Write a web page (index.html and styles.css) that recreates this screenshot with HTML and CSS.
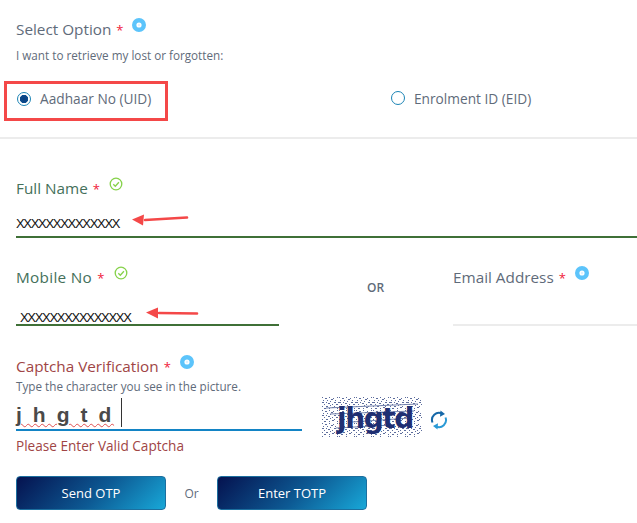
FILE: index.html
```html
<!DOCTYPE html>
<html lang="en">
<head>
    <meta charset="UTF-8">
    <title>Retrieve Lost or Forgotten EID/UID</title>
    <link rel="stylesheet" href="styles.css">
</head>
<body>
    <section class="option-block">
        <div class="label">Select Option <span class="req">*</span> <svg class="info" viewBox="0 0 14 14"><circle cx="7" cy="7" r="4.8" fill="none" stroke="#5cc4fb" stroke-width="4.4"/><circle cx="7" cy="7" r="1.2" fill="#e0f2ff"/></svg></div>
        <p class="hint">I want to retrieve my lost or forgotten:</p>
        <div class="radio-row">
            <div class="radio-item marked">
                <span class="radio checked"></span>
                <span>Aadhaar No (UID)</span>
            </div>
            <div class="radio-item second">
                <span class="radio"></span>
                <span>Enrolment ID (EID)</span>
            </div>
        </div>
    </section>

    <section class="form-block">
        <div class="field">
            <div class="label green">Full Name <span class="req">*</span> <svg class="ok" viewBox="0 0 14 14"><circle cx="7" cy="7" r="5.8" fill="none" stroke="#86d24a" stroke-width="1.3"/><path d="M4.3 7.2l2 2 3.6-4" fill="none" stroke="#86d24a" stroke-width="1.3"/></svg></div>
            <div class="value-line full">
                <span class="typed">XXXXXXXXXXXXXX</span>
                <svg class="arrow arrow-name" viewBox="0 0 58 14"><path d="M56 4.5L14 7" stroke="#f44848" stroke-width="2.6" stroke-linecap="round" fill="none"/><path d="M1 6.5L13 1.5L12 12.5Z" fill="#f44848"/></svg>
            </div>
        </div>

        <div class="contact-row">
            <div class="field mobile">
                <div class="label green">Mobile No <span class="req">*</span> <svg class="ok" viewBox="0 0 14 14"><circle cx="7" cy="7" r="5.8" fill="none" stroke="#86d24a" stroke-width="1.3"/><path d="M4.3 7.2l2 2 3.6-4" fill="none" stroke="#86d24a" stroke-width="1.3"/></svg></div>
                <div class="value-line short">
                    <span class="typed">XXXXXXXXXXXXXXX</span>
                    <svg class="arrow arrow-mobile" viewBox="0 0 54 14"><path d="M52 7.5L14 7" stroke="#f44848" stroke-width="2.6" stroke-linecap="round" fill="none"/><path d="M1 6.5L13 1.5L13 12.5Z" fill="#f44848"/></svg>
                </div>
            </div>
            <div class="or-mark">OR</div>
            <div class="field email">
                <div class="label">Email Address <span class="req">*</span> <svg class="info" viewBox="0 0 14 14"><circle cx="7" cy="7" r="4.8" fill="none" stroke="#5cc4fb" stroke-width="4.4"/><circle cx="7" cy="7" r="1.2" fill="#e0f2ff"/></svg></div>
                <div class="value-line empty"></div>
            </div>
        </div>

        <div class="captcha-block">
            <div class="label red">Captcha Verification <span class="req">*</span> <svg class="info" viewBox="0 0 14 14"><circle cx="7" cy="7" r="4.8" fill="none" stroke="#5cc4fb" stroke-width="4.4"/><circle cx="7" cy="7" r="1.2" fill="#e0f2ff"/></svg></div>
            <p class="hint tight">Type the character you see in the picture.</p>
            <div class="captcha-row">
                <div class="captcha-input"><span class="captcha-text">j h g t d</span><span class="caret"></span></div>
                <svg class="captcha-img" viewBox="0 0 100 40">
                    <defs>
                        <pattern id="noise" width="17" height="13" patternUnits="userSpaceOnUse">
                            <path d="M0 0h1v1H0zM3 1h2v1H3zM7 0h1v1H7zM11 1h1v1h-1zM15 0h1v1h-1zM1 3h1v1H1zM5 3h1v1H5zM9 2h2v1H9zM13 3h1v1h-1zM0 5h2v1H0zM4 5h1v1H4zM8 4h1v1H8zM12 5h2v1h-2zM16 5h1v1h-1zM2 7h1v1H2zM6 6h2v1H6zM10 7h1v1h-1zM14 7h2v1h-2zM0 9h1v1H0zM4 9h2v1H4zM8 8h1v1H8zM12 9h1v1h-1zM2 11h2v1H2zM7 11h1v1H7zM10 10h2v1h-2zM15 11h1v1h-1z" fill="#5c6c9c"/>
                        </pattern>
                    </defs>
                    <rect width="100" height="40" fill="#ffffff"/>
                    <rect width="100" height="40" fill="url(#noise)"/>
                    <path d="M4 11L96 7M8 17L92 14M30 25L88 21M14 31L70 28" stroke="#7583ad" stroke-width="1.2" fill="none"/>
                    <text class="captcha-word" x="15" y="31">jhgtd</text>
                </svg>
                <svg class="refresh" viewBox="0 0 18 20"><path d="M2.5 12.5A7 7 0 0 1 12 3.6" fill="none" stroke="#1668a8" stroke-width="2"/><path d="M10.5 0.5L15 4L10 6.8Z" fill="#1668a8"/><path d="M15.5 7.5A7 7 0 0 1 6 16.4" fill="none" stroke="#2b9ad6" stroke-width="2"/><path d="M7.5 19.5L3 16L8 13.2Z" fill="#2b9ad6"/></svg>
            </div>
            <p class="error">Please Enter Valid Captcha</p>
        </div>

        <div class="button-row">
            <button class="btn">Send OTP</button>
            <span class="btn-or">Or</span>
            <button class="btn">Enter TOTP</button>
        </div>
    </section>
</body>
</html>
```

FILE: styles.css
```css
body {
    font-family: "Open Sans", "Noto Sans", sans-serif;
    margin: 0;
    background-color: #ffffff;
    color: #5f6b7a;
    height: 523px;
    overflow: hidden;
}
p {
    margin: 0;
}
.option-block {
    padding: 18px 0 0 0;
    height: 119px;
    border-bottom: 2px solid #ececec;
}
.label {
    font-size: 15.3px;
    line-height: 20px;
    padding-left: 16px;
    white-space: nowrap;
}
.label.green {
    color: #44705a;
}
.label.red {
    color: #a04545;
}
.req {
    color: #f0203a;
    font-size: 13px;
    margin-left: 1px;
}
.info, .ok {
    width: 14px;
    height: 14px;
    margin-left: 5px;
    vertical-align: 3px;
}
.hint {
    font-size: 11.7px;
    line-height: 15px;
    margin-top: 8px;
    padding-left: 16px;
}
.hint.tight {
    margin-top: 2px;
}
.radio-row {
    display: flex;
    align-items: center;
    margin-top: 18px;
    font-size: 13.7px;
}
.radio-item {
    display: flex;
    align-items: center;
    gap: 9px;
    height: 40px;
    box-sizing: border-box;
    padding-bottom: 6px;
}
.radio-item.marked {
    margin-left: 4px;
    padding: 0 9px 5px 10px;
    width: 164px;
    border: 3px solid #f44848;
}
.radio-item.second {
    margin-left: 223px;
}
.radio {
    width: 12px;
    height: 12px;
    border: 1px solid #1b84b5;
    border-radius: 50%;
    display: block;
    flex-shrink: 0;
    box-sizing: content-box;
}
.radio.checked {
    background: radial-gradient(circle, #0a3f80 0, #0a4a8c 3.8px, #ffffff 4.5px);
}
.form-block {
    padding-top: 38px;
}
.value-line {
    position: relative;
    box-sizing: border-box;
    border-bottom: 2px solid #3f7037;
}
.value-line.full {
    margin: 10px 0 0 16px;
    height: 29px;
    padding-top: 5px;
}
.value-line.short {
    margin: 10px 0 0 0;
    width: 263px;
    height: 28px;
    padding: 10px 0 0 4px;
}
.value-line.empty {
    margin-top: 10px;
    height: 28px;
    border-bottom-color: #ececec;
}
.typed {
    font-family: "Liberation Sans", Arial, sans-serif;
    font-size: 13px;
    line-height: 20px;
    color: #111111;
    display: block;
    letter-spacing: -1.3px;
}
.arrow {
    position: absolute;
}
.arrow-name {
    left: 115px;
    top: 4px;
    width: 58px;
    height: 14px;
}
.arrow-mobile {
    left: 129px;
    top: 8px;
    width: 54px;
    height: 14px;
}
.contact-row {
    display: flex;
    margin-top: 28px;
}
.contact-row .label {
    padding-left: 0;
}
.mobile .label {
    letter-spacing: 0.3px;
}
.mobile {
    margin-left: 16px;
    width: 263px;
}
.or-mark {
    width: 174px;
    padding: 14px 0 0 88px;
    box-sizing: border-box;
    font-size: 12px;
    line-height: 16px;
    font-weight: 600;
}
.email {
    flex: 1;
}
.captcha-block {
    margin-top: 29px;
}
.captcha-row {
    display: flex;
    align-items: flex-start;
    padding-left: 16px;
    margin-top: 3px;
}
.captcha-input {
    width: 286px;
    height: 34px;
    box-sizing: border-box;
    border-bottom: 2px solid #1384c5;
    display: flex;
    align-items: flex-end;
    padding-bottom: 2px;
}
.captcha-text {
    font-family: "Liberation Sans", Arial, sans-serif;
    font-size: 21px;
    line-height: 24px;
    font-weight: bold;
    letter-spacing: 2.6px;
    color: #4a4a4a;
    text-decoration: underline wavy #e05050 1px;
    text-underline-offset: 1px;
}
.caret {
    width: 1px;
    height: 29px;
    margin-left: 7px;
    background-color: #333333;
}
.captcha-img {
    width: 100px;
    height: 40px;
    margin-left: 20px;
    flex-shrink: 0;
}
.captcha-word {
    font-family: "DejaVu Sans", sans-serif;
    font-size: 28px;
    font-weight: bold;
    fill: #1f2f72;
    letter-spacing: -1.4px;
}
.refresh {
    width: 18px;
    height: 20px;
    margin: 13px 0 0 8px;
}
.error {
    font-size: 13.6px;
    line-height: 18px;
    color: #a04545;
    padding-left: 16px;
}
.button-row {
    display: flex;
    align-items: center;
    padding-left: 16px;
    margin-top: 21px;
}
.btn {
    width: 150px;
    height: 34px;
    border: 1px solid #1c6f9f;
    border-radius: 4px;
    background: linear-gradient(135deg, #05124f 0%, #0d5a94 55%, #18a8d8 100%);
    color: #ffffff;
    font-family: inherit;
    font-size: 13px;
    padding: 0;
}
.btn-or {
    width: 51px;
    text-align: center;
    font-size: 12px;
}
```
